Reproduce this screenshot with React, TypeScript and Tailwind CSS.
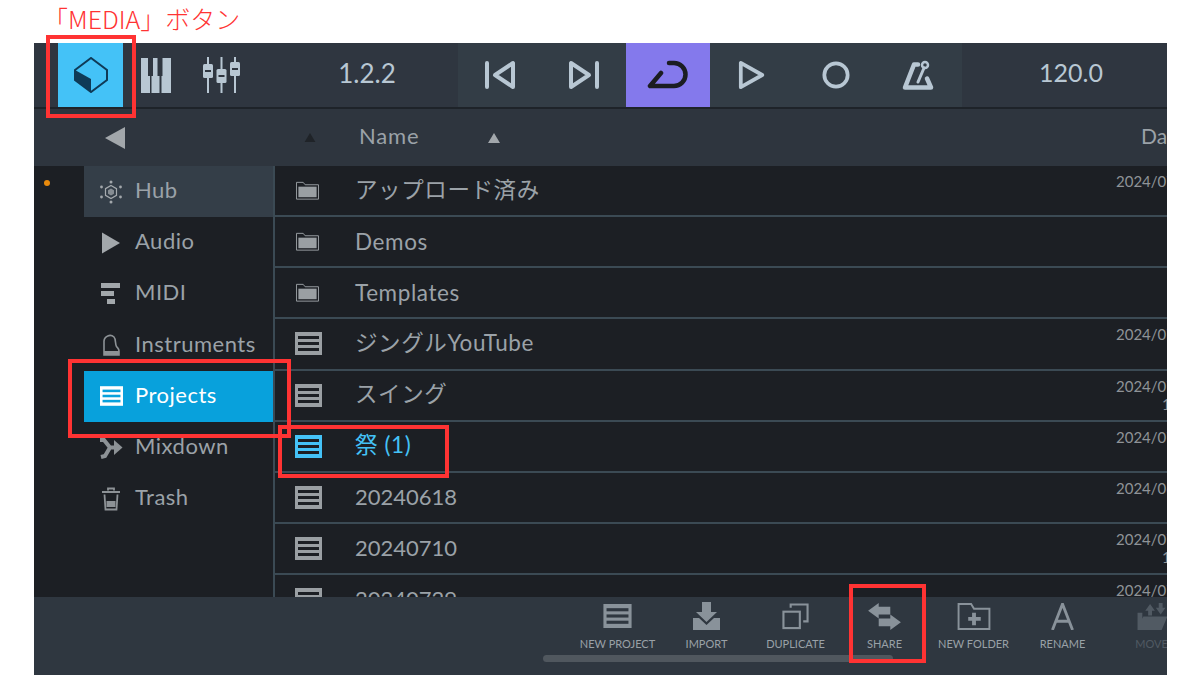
import React from "react";

const Doc = ({ c = "#9a9fa3", d = "#1c1f24", className = "w-[27px] h-[23px]" }: { c?: string; d?: string; className?: string }) => (
  <svg viewBox="0 0 27 23" className={className}>
    <rect width="27" height="23" fill={c} />
    <rect x="3" y="4" width="21" height="3" fill={d} />
    <rect x="3" y="10" width="21" height="3" fill={d} />
    <rect x="3" y="16" width="21" height="3" fill={d} />
  </svg>
);

const Folder = () => (
  <svg viewBox="0 0 24 19" className="w-[23px] h-[19px] mr-[2px]">
    <path d="M.5 18.500V1h7l2 2.500h14v15z" fill="none" stroke="#9a9fa3" />
    <rect x="2.500" y="5.500" width="19" height="11" fill="#9a9fa3" />
  </svg>
);

const rows: { name: string; icon: "folder" | "doc" | "active"; date?: string; second?: boolean; digits?: boolean; latin?: boolean }[] = [
  { name: "アップロード済み", icon: "folder", date: "2024/07/02" },
  { name: "Demos", icon: "folder", latin: true },
  { name: "Templates", icon: "folder", latin: true },
  { name: "ジングルYouTube", icon: "doc", date: "2024/07/05" },
  { name: "スイング", icon: "doc", date: "2024/07/08", second: true },
  { name: "祭 (1)", icon: "active", date: "2024/07/09" },
  { name: "20240618", icon: "doc", date: "2024/06/18", digits: true },
  { name: "20240710", icon: "doc", date: "2024/07/10", second: true, digits: true },
  { name: "20240729", icon: "doc", date: "2024/07/29", digits: true },
];

const side: { name: string; icon: React.ReactNode; bg?: string; text?: string }[] = [
  {
    name: "Hub",
    bg: "bg-[#343e48]",
    icon: (
      <svg viewBox="0 0 24 24" className="w-[24px] h-[24px]" fill="#a2a7ab">
        <path d="M12 5.500l5.500 3.200v6.600L12 18.500l-5.500-3.200V8.700z" fill="none" stroke="#a6abaf" strokeWidth="1.200" />
        <path d="M12 8.500l3 1.800v3.400l-3 1.800-3-1.800v-3.400z" fill="#868d93" />
        <circle cx="12" cy="2" r="1.500" />
        <circle cx="12" cy="22" r="1.500" />
        <circle cx="2.500" cy="7" r="1.400" />
        <circle cx="21.500" cy="7" r="1.400" />
        <circle cx="2.500" cy="17" r="1.400" />
        <circle cx="21.500" cy="17" r="1.400" />
      </svg>
    ),
  },
  {
    name: "Audio",
    icon: (
      <svg viewBox="0 0 24 24" className="w-[24px] h-[24px]">
        <path d="M3 1.500L21 12 3 22.500z" fill="#a2a7ab" />
      </svg>
    ),
  },
  {
    name: "MIDI",
    icon: (
      <svg viewBox="0 0 24 24" className="w-[24px] h-[24px]" fill="#a2a7ab">
        <rect x="2" y="1" width="19" height="5" />
        <rect x="2" y="9" width="13" height="5" />
        <rect x="8" y="17" width="8" height="5" />
      </svg>
    ),
  },
  {
    name: "Instruments",
    icon: (
      <svg viewBox="0 0 24 24" className="w-[24px] h-[24px]" fill="none" stroke="#8d9296" strokeWidth="1.600">
        <path d="M5 22V8a6 6 0 0 1 10 -4c2 2 1 7 2.500 9.500 1 1.500 2.500 2 2.500 4.500v4z" />
        <path d="M5 20h15" strokeWidth="4" />
      </svg>
    ),
  },
  {
    name: "Projects",
    bg: "bg-[#08a1dc]",
    text: "text-white",
    icon: <Doc c="#ffffff" d="#08a1dc" className="w-[23px] h-[20px]" />,
  },
  {
    name: "Mixdown",
    icon: (
      <svg viewBox="0 0 24 24" className="w-[24px] h-[24px]" fill="none" stroke="#8d9296" strokeWidth="4">
        <path d="M1 4h4l6 7.500h5M2 21l4-1 5-8.500" />
        <path d="M15 4l8.500 7.500L15 19z" fill="#8d9296" stroke="none" />
      </svg>
    ),
  },
  {
    name: "Trash",
    icon: (
      <svg viewBox="0 0 24 24" className="w-[24px] h-[24px]" fill="none" stroke="#8d9296">
        <path d="M3 5h18M9 3.500V1.500h6v2M5.500 7.500l1 15h11l1-15" strokeWidth="1.800" />
        <rect x="7.500" y="14" width="9" height="6" fill="#8d9296" stroke="none" />
      </svg>
    ),
  },
];

const transport: { key: string; active?: boolean; icon: React.ReactNode }[] = [
  {
    key: "prev",
    icon: (
      <svg viewBox="0 0 32 30" className="w-[32px] h-[30px]" fill="none" stroke="#b8c7d3" strokeWidth="4" strokeLinejoin="round" strokeLinecap="round">
        <path d="M3 3v24M29 3v24L11 15z" />
      </svg>
    ),
  },
  {
    key: "next",
    icon: (
      <svg viewBox="0 0 32 30" className="w-[32px] h-[30px]" fill="none" stroke="#b8c7d3" strokeWidth="4" strokeLinejoin="round" strokeLinecap="round">
        <path d="M29 3v24M3 3v24l18-12z" />
      </svg>
    ),
  },
  {
    key: "loop",
    active: true,
    icon: (
      <svg viewBox="0 0 42 32" className="w-[42px] h-[32px]" fill="none" stroke="#1b1d22" strokeWidth="4.500" strokeLinecap="round" strokeLinejoin="round">
        <path d="M14 14L3 27h24a11.500 11.500 0 0 0 0-23h-5" />
      </svg>
    ),
  },
  {
    key: "play",
    icon: (
      <svg viewBox="0 0 30 32" className="w-[28px] h-[30px]" fill="none" stroke="#b8c7d3" strokeWidth="4" strokeLinejoin="round">
        <path d="M3 3v26l23-13z" />
      </svg>
    ),
  },
  {
    key: "rec",
    icon: (
      <svg viewBox="0 0 30 30" className="w-[28px] h-[28px]" fill="none" stroke="#b8c7d3" strokeWidth="4">
        <circle cx="15" cy="15" r="12.500" />
      </svg>
    ),
  },
  {
    key: "metro",
    icon: (
      <svg viewBox="8 10 32 32" className="w-[32px] h-[32px] mr-[4px]" fill="none" stroke="#b8c7d3" strokeLinejoin="round" strokeLinecap="round">
        <path d="M11 38.500L20 15.500h4M11 38.500h26l-4-9" strokeWidth="4.500" />
        <path d="M24 33l6-14" strokeWidth="3" />
        <circle cx="31" cy="16" r="3" strokeWidth="2.500" />
      </svg>
    ),
  },
];

const tools: { label: string; dim?: boolean; icon: React.ReactNode }[] = [
  { label: "NEW PROJECT", icon: <Doc c="#89929a" d="#2f3740" className="w-[29px] h-[24px]" /> },
  {
    label: "IMPORT",
    icon: (
      <svg viewBox="0 0 27 28" className="w-[27px] h-[28px]" fill="#89929a">
        <path d="M9 0h9v10h6l-10.500 10L3 10h6z" />
        <path d="M0 16h6l7.500 7 7.500-7h6v12H0z" />
      </svg>
    ),
  },
  {
    label: "DUPLICATE",
    icon: (
      <svg viewBox="0 0 28 28" className="w-[27px] h-[27px]" fill="none" stroke="#89929a" strokeWidth="2.200">
        <rect x="1.500" y="9" width="17" height="17" />
        <path d="M9 5V1.500h17.500V19H22" />
      </svg>
    ),
  },
  {
    label: "SHARE",
    icon: (
      <svg viewBox="0 0 34 28" className="w-[33px] h-[27px]" fill="#89929a">
        <path d="M0 8L11 0v4h12v8H11v4z" />
        <path d="M34 20l-11-8v4H11v8h12v4z" />
      </svg>
    ),
  },
  {
    label: "NEW FOLDER",
    icon: (
      <svg viewBox="0 0 34 28" className="w-[34px] h-[27px]" fill="none" stroke="#89929a" strokeWidth="2">
        <path d="M1 27V1h13l3 5h16v21z" />
        <path d="M17 10v13M11 16.500h13" strokeWidth="4" />
      </svg>
    ),
  },
  {
    label: "RENAME",
    icon: (
      <svg viewBox="0 0 24 28" className="w-[23px] h-[27px]" fill="none" stroke="#89929a" strokeWidth="3">
        <path d="M1.500 28L12 1l10.500 27M5.500 19h13" />
      </svg>
    ),
  },
  {
    label: "MOVE",
    dim: true,
    icon: (
      <svg viewBox="0 0 32 28" className="w-[32px] h-[27px]" fill="#515a63">
        <path d="M1 28V10h5v18zM7 14h25l-6 14H1zM9 8l5-7 5 7h-3v5h-4V8zM20 5h3V0h4v5h3l-5 7z" />
      </svg>
    ),
  },
];

export default function App() {
  return (
    <div className="relative w-[1200px] h-[675px] bg-white overflow-hidden font-['Lato','Noto_Sans_CJK_JP',sans-serif]">
      <div className="h-[43px] pl-[43px] pt-[2px] text-[25px] leading-[32px] font-light text-[#ff3333] font-['Noto_Sans_CJK_JP',sans-serif]">「MEDIA」ボタン</div>

      <div className="ml-[34px] w-[1133px] h-[632px] flex flex-col overflow-hidden bg-[#2f3640]">
        {/* top bar */}
        <div className="h-[64px] shrink-0 flex items-center bg-[#2f3640]">
          <div className="ml-[24px] w-[65px] h-[64px] flex items-center justify-center bg-[#44c2f7]">
            <svg viewBox="0 0 34 36" className="w-[34px] h-[36px] ml-[1px]">
              <path d="M1 13L17 1l16 12v10L17 35 1 23z" fill="none" stroke="#0f3a57" strokeWidth="2" />
              <path d="M1 13l16 9v13L1 23z" fill="#0f3a57" />
            </svg>
          </div>
          <svg viewBox="0 0 30 35" className="ml-[18px] w-[30px] h-[35px]" fill="#b8c7d3">
            <path d="M0 0h7v18h2v17H0z" />
            <path d="M12 0h4.500v18h2v17H10.500V18H12z" />
            <path d="M21.500 0H30v35h-9.500V18h1z" />
          </svg>
          <svg viewBox="0 0 40 36" className="ml-[31px] w-[40px] h-[36px]" fill="#b8c7d3">
            <rect x="5" y="0" width="2" height="36" />
            <rect x="18.500" y="0" width="2" height="36" />
            <rect x="32" y="0" width="2" height="36" />
            <rect x="1" y="7" width="10" height="14" rx="1.500" />
            <rect x="14.500" y="12" width="10" height="14" rx="1.500" />
            <rect x="28" y="5" width="10" height="14" rx="1.500" />
            <rect x="3" y="13" width="6" height="2" fill="#2f3640" />
            <rect x="16.500" y="18" width="6" height="2" fill="#2f3640" />
            <rect x="30" y="11" width="6" height="2" fill="#2f3640" />
          </svg>
          <div className="w-[216px] pl-[34px] mb-[3px] text-center text-[26px] text-[#b8c7d3]">1.2.2</div>
          <div className="flex h-[64px] bg-[#333d46]">
            {transport.map((t) => (
              <div key={t.key} className={`w-[84px] flex items-center justify-center ${t.active ? "bg-[#8479ec]" : ""}`}>
                {t.icon}
              </div>
            ))}
          </div>
          <div className="flex-1 pl-[13px] mb-[4px] text-center text-[25px] text-[#b8c7d3]">120.0</div>
        </div>
        <div className="h-[2px] shrink-0 bg-[#1e2329]" />

        {/* header */}
        <div className="h-[57px] shrink-0 flex items-center bg-[#2e353e]">
          <svg viewBox="0 0 20 22" className="ml-[71px] w-[20px] h-[22px]"><path d="M0 11L20 0v22z" fill="#a2a7ab" /></svg>
          <svg viewBox="0 0 12 10" className="ml-[179px] w-[12px] h-[9px]"><path d="M6 0l6 10H0z" fill="#1f2328" /></svg>
          <span className="ml-[43px] mb-[4px] text-[22px] tracking-[0.8px] text-[#9ba2a8]">Name</span>
          <svg viewBox="0 0 12 10" className="ml-[69px] w-[12px] h-[10px]"><path d="M6 0l6 10H0z" fill="#a2a7ab" /></svg>
          <span className="ml-auto mr-[-8px] mb-[4px] w-[34px] overflow-hidden text-[21px] text-[#9ba2a8]">Date</span>
        </div>

        {/* body */}
        <div className="flex-1 min-h-0 flex bg-[#1c1f24]">
          <div className="w-[50px] shrink-0 pl-[10px] pt-[14px]">
            <div className="w-[6px] h-[6px] rounded-full bg-[#e88a0c]" />
          </div>
          <div className="w-[191px] shrink-0 border-r-2 border-[#3b4a54]">
            {side.map((s) => (
              <div key={s.name} className={`h-[51.2px] flex items-center pl-[15px] ${s.bg ?? ""}`}>
                <div className="w-[24px] flex justify-center">{s.icon}</div>
                <span className={`ml-[12px] mb-[4px] text-[22px] tracking-[0.5px] ${s.text ?? "text-[#9ba2a8]"}`}>{s.name}</span>
              </div>
            ))}
          </div>
          <div className="flex-1 min-w-0 overflow-hidden">
            {rows.map((r) => (
              <div key={r.name} className="h-[51.15px] flex items-center border-b-2 border-[#3b4a54] pl-[20px]">
                <div className="w-[27px] flex justify-center">
                  {r.icon === "folder" ? <Folder /> : r.icon === "active" ? <Doc c="#44c2f7" d="#1c1f24" /> : <Doc />}
                </div>
                <span className={`ml-[33px] ${r.latin ? "" : "mb-[2px]"} ${r.digits ? "text-[22px]" : "text-[22.5px] tracking-[0.6px]"} ${r.icon === "active" ? "text-[#44c2f7]" : "text-[#9ba2a8]"}`}>{r.name}</span>
                {r.date && (
                  <div className="ml-auto mr-[-49px] self-start pt-[6px] w-[100px] text-[15px] leading-[18px] whitespace-nowrap text-[#8f9397]">
                    {r.date}
                    {r.second && <div className="pl-[46px]">17:30</div>}
                  </div>
                )}
              </div>
            ))}
          </div>
        </div>

        {/* toolbar */}
        <div className="relative h-[78px] shrink-0 flex items-start pl-[539px] pt-[5px] bg-[#2f3740] overflow-hidden">
          {tools.map((t) => (
            <div key={t.label} className="w-[89px] shrink-0 flex flex-col items-center">
              <div className="h-[28px] flex items-center justify-center">{t.icon}</div>
              <span className={`mt-[7px] text-[11px] leading-[14px] whitespace-nowrap ${t.dim ? "text-[#515a63]" : "text-[#9aa1a7]"}`}>{t.label}</span>
            </div>
          ))}
          <div className="absolute left-[509px] top-[58px] w-[350px] h-[7px] rounded-full bg-[#50575e]" />
        </div>
      </div>

      {/* red annotations */}
      <div className="absolute left-[46px] top-[35px] w-[90px] h-[83px] border-4 border-[#ff3333]" />
      <div className="absolute left-[68px] top-[359px] w-[223px] h-[79px] border-4 border-[#ff3333]" />
      <div className="absolute left-[278px] top-[425px] w-[171px] h-[53px] border-4 border-[#ff3333]" />
      <div className="absolute left-[849px] top-[584px] w-[77px] h-[79px] border-4 border-[#ff3333]" />
    </div>
  );
}
